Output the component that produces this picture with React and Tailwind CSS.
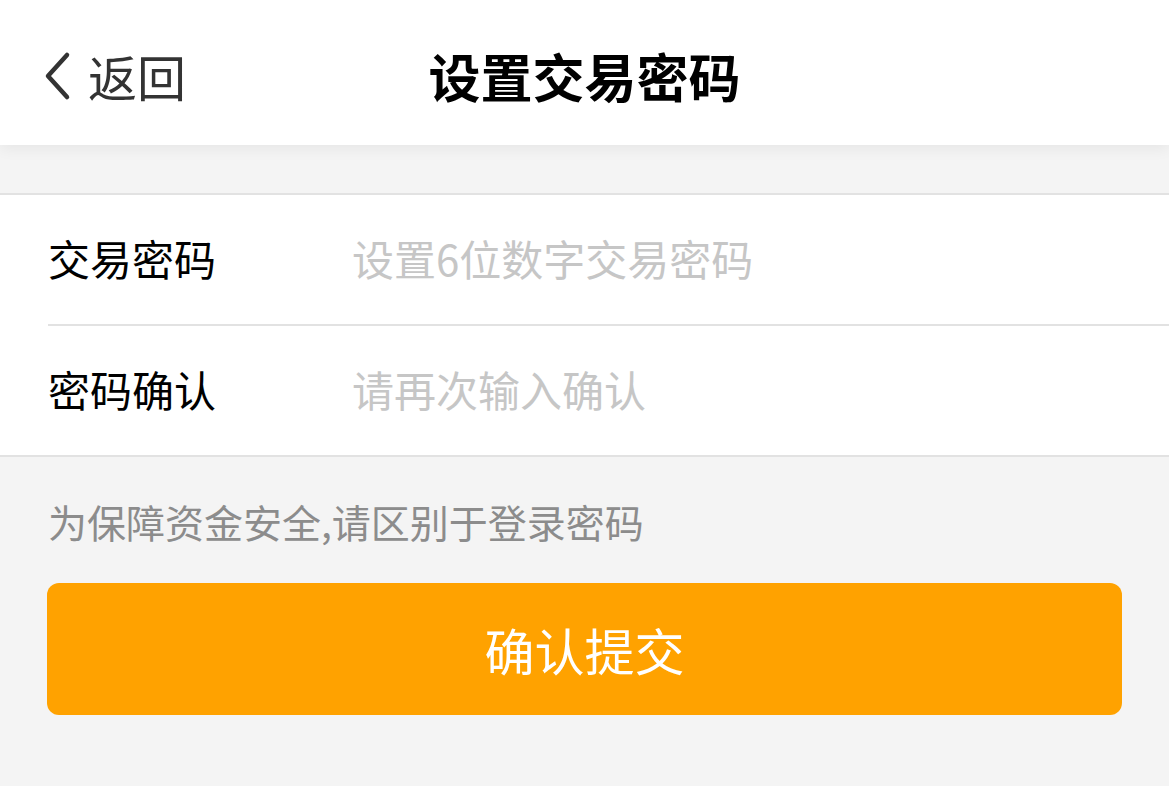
import React, { useState } from 'react';

export default function App() {
    const [password, setPassword] = useState('');
    const [confirm, setConfirm] = useState('');

    return (
        <div
            className="min-h-[786px] w-full bg-[#f4f4f4]"
            style={{ fontFamily: '"Noto Sans CJK SC", "Noto Sans", sans-serif' }}
        >
            <div className="relative z-10 flex h-[145px] items-center bg-white pt-[6px] shadow-[0_4px_14px_rgba(0,0,0,0.06)]">
                <button className="flex items-center pl-[40px] text-[#333333]">
                    <svg width="34" height="50" viewBox="0 0 34 50" fill="none">
                        <path d="M27 4 L8 25 L27 46" stroke="#333333" strokeWidth="4.5" strokeLinecap="round" strokeLinejoin="round" />
                    </svg>
                    <span className="ml-[14px] text-[49px] leading-none">返回</span>
                </button>
                <h1 className="absolute left-1/2 top-[50px] -translate-x-1/2 text-[52px] font-bold leading-none text-black">设置交易密码</h1>
            </div>

            <div className="h-[48px]" />

            <div className="border-y-2 border-[#e2e2e2] bg-white">
                <div className="flex h-[131px] items-center border-b-2 border-[#e2e2e2] ml-[48px] pb-[4px]">
                    <span className="w-[304px] text-[42px] leading-none text-black">交易密码</span>
                    <input
                        type="password"
                        value={password}
                        onChange={(e) => setPassword(e.target.value)}
                        placeholder="设置6位数字交易密码"
                        className="flex-1 bg-transparent text-[42px] leading-none outline-none placeholder:text-[#c6c6c6]"
                    />
                </div>
                <div className="flex h-[129px] items-center pl-[48px] pb-[4px]">
                    <span className="w-[304px] text-[42px] leading-none text-black">密码确认</span>
                    <input
                        type="password"
                        value={confirm}
                        onChange={(e) => setConfirm(e.target.value)}
                        placeholder="请再次输入确认"
                        className="flex-1 bg-transparent text-[42px] leading-none outline-none placeholder:text-[#c6c6c6]"
                    />
                </div>
            </div>

            <p className="px-[48px] pt-[45px] text-[39px] leading-none text-[#8c8c8c]">为保障资金安全,请区别于登录密码</p>

            <div className="px-[47px] pt-[42px]">
                <button className="flex h-[132px] w-full items-center justify-center rounded-[12px] bg-[#ffa200] text-[50px] leading-none text-white">
                    确认提交
                </button>
            </div>
        </div>
    );
}
